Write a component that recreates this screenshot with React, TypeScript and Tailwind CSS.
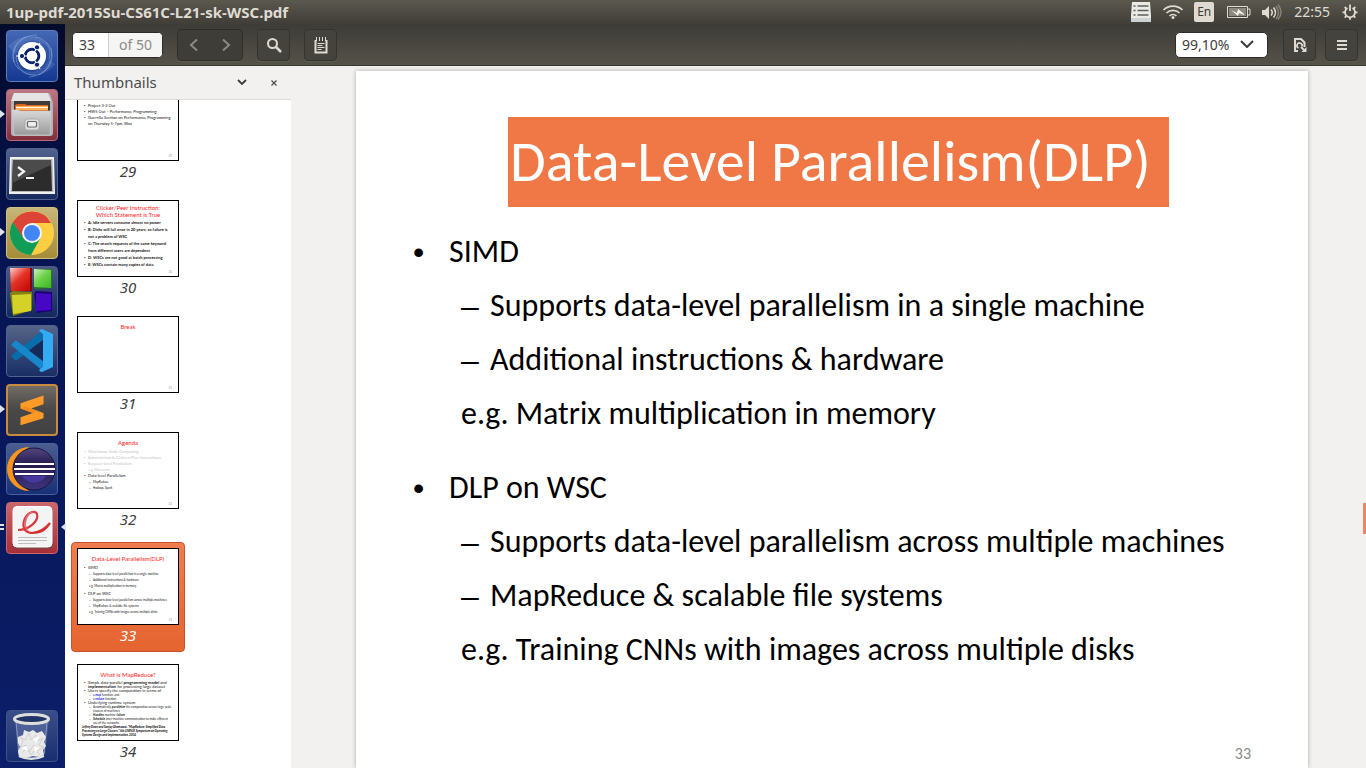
import React from "react";

type Line = { text: React.ReactNode; level?: 0 | 1 | 2 | 3; bold?: boolean; faded?: boolean };
type Page = { number: number; title?: string[]; lines?: Line[]; note?: string; frameClass?: string; listClass?: string };

const pages: Page[] = [
  {
    number: 29,
    listClass: "mt-3 leading-[6px]",
    lines: [
      { text: "Project 3-2 Out" },
      { text: "HW5 Out – Performance Programming" },
      { text: "Guerrilla Section on Performance Programming on Thursday 5-7pm, Woz" },
    ],
  },
  {
    number: 30,
    title: ["Clicker/Peer Instruction:", "Which Statement is True"],
    frameClass: "pt-[3px]",
    listClass: "mt-px leading-[7px]",
    lines: [
      { text: "A: Idle servers consume almost no power", bold: true },
      { text: "B: Disks will fail once in 20 years, so failure is not a problem of WSC", bold: true },
      { text: "C: The search requests of the same keyword from different users are dependent", bold: true },
      { text: "D: WSCs are not good at batch processing", bold: true },
      { text: "E: WSCs contain many copies of data", bold: true },
    ],
  },
  { number: 31, title: ["Break"] },
  {
    number: 32,
    title: ["Agenda"],
    lines: [
      { text: "Warehouse Scale Computing", faded: true },
      { text: "Administrivia & Clickers/Peer Instructions", faded: true },
      { text: "Request-level Parallelism", faded: true },
      { text: "e.g. Web search", level: 2, faded: true },
      { text: "Data-level Parallelism" },
      { text: "MapReduce", level: 1 },
      { text: "Hadoop, Spark", level: 1 },
    ],
  },
  {
    number: 33,
    title: ["Data-Level Parallelism(DLP)"],
    lines: [
      { text: "SIMD" },
      { text: "Supports data-level parallelism in a single machine", level: 1 },
      { text: "Additional instructions & hardware", level: 1 },
      { text: "e.g. Matrix multiplication in memory", level: 2 },
      { text: "DLP on WSC", level: 3 },
      { text: "Supports data-level parallelism across multiple machines", level: 1 },
      { text: "MapReduce & scalable file systems", level: 1 },
      { text: "e.g. Training CNNs with images across multiple disks", level: 2 },
    ],
  },
  {
    number: 34,
    title: ["What is MapReduce?"],
    listClass: "mt-[3px] leading-[4px]",
    lines: [
      { text: <>Simple data-parallel <b>programming model</b> and <b>implementation</b> for processing large dataset</> },
      { text: "Users specify the computation in terms of" },
      { text: <>a <b className="text-[#2020ff]">map</b> function, and</>, level: 1 },
      { text: <>a <b className="text-[#2020ff]">reduce</b> function</>, level: 1 },
      { text: "Underlying runtime system" },
      { text: <>Automatically <b>parallelize</b> the computation across large scale clusters of machines</>, level: 1 },
      { text: <><b>Handles</b> machine <b>failure</b></>, level: 1 },
      { text: <><b>Schedule</b> inter-machine communication to make efficient use of the networks</>, level: 1 },
    ],
    note: "Jeffrey Dean and Sanjay Ghemawat, “MapReduce: Simplified Data Processing on Large Clusters,” 6th USENIX Symposium on Operating Systems Design and Implementation, 2004",
  },
];

function ThumbLine({ line }: { line: Line }) {
  const level = line.level ?? 0;
  const dash = level === 1;
  const bullet = level === 0 || level === 3;
  const size = bullet ? "text-[4px]" : "text-[3px]";
  const indent = dash || level === 2 ? "pl-[5px]" : "";
  const tone = line.faded ? "text-[#c4c4c4]" : "text-[#111]";
  return (
    <li className={`flex ${size} ${indent} ${tone} ${line.bold ? "font-bold" : ""} ${level === 3 ? "mt-[2px]" : ""}`}>
      {level !== 2 && <span className="w-1 shrink-0 font-['Liberation_Sans',sans-serif]">{dash ? "–" : "•"}</span>}
      <span>{line.text}</span>
    </li>
  );
}

function Thumbnail({ page, selected }: { page: Page; selected: boolean }) {
  return (
    <li>
      <button
        aria-current={selected ? "page" : undefined}
        className={`flex h-[110px] w-[114px] flex-col items-center rounded pt-[5px] ${
          selected
            ? "border border-[#c5522a] bg-linear-to-b from-[#f07d4f] to-[#e5642f] text-white"
            : "border border-transparent text-[#3c3c3c]"
        }`}
      >
        <span className={`relative block h-[77px] w-[102px] overflow-hidden border border-black bg-white px-1.5 text-left font-['Lato',sans-serif] ${page.frameClass ?? "pt-1.5"}`}>
          {page.title?.map((t) => (
            <span key={t} className="block text-center text-[6px] leading-[7px] whitespace-nowrap text-[#ff2222]">{t}</span>
          ))}
          {page.lines && (
            <ul className={page.listClass ?? "mt-[3px] leading-[6px]"}>
              {page.lines.map((l, i) => <ThumbLine key={i} line={l} />)}
            </ul>
          )}
          {page.note && <span className="-mx-0.5 block text-[3px] leading-[4px] font-bold text-black italic">{page.note}</span>}
          {!page.note && <span className="absolute right-1.5 bottom-0.5 text-[3px] leading-[4px] text-[#999]">{page.number}</span>}
        </span>
        <span className="text-[15px] leading-5 italic">{page.number}</span>
      </button>
    </li>
  );
}

const icon = "block size-[50px]";

function DashIcon() {
  return (
    <svg viewBox="1 1 50 50" className={icon}>
      <g fill="none" stroke="#8fb0e8" strokeOpacity=".5">
        <path d="M8 32C5 17 15 5 31 5M13 39C3 30 5 13 20 7M45 18c3 16-7 28-22 29M40 12c9 8 9 25-7 33M29 7c12 1 17 12 14 22M10 27c1 12 9 19 20 18" />
      </g>
      <path d="M2 16C16 2 35 2 43 18 30 6 17 8 9 24zM49 34C38 49 17 49 9 35c12 11 27 8 34-6z" fill="#b7ccf3" opacity=".16" />
      <circle cx="26" cy="26" r="14" fill="#fff" />
      <circle cx="26" cy="26" r="6.8" fill="none" stroke="#06246c" strokeWidth="3" />
      <path d="M26 26l8-13M26 26l8 13M26 26H10" stroke="#fff" strokeWidth="1.2" />
      <circle cx="26" cy="26" r="5.3" fill="#fff" />
      <g fill="#06246c" stroke="#fff" strokeWidth="1"><circle cx="16" cy="26" r="2.6" /><circle cx="31" cy="17.3" r="2.6" /><circle cx="31" cy="34.7" r="2.6" /></g>
    </svg>
  );
}

function FilesIcon() {
  return (
    <svg viewBox="1 1 50 50" className={icon}>
      <defs><linearGradient id="cab" x2="0" y2="1"><stop stopColor="#d9d9d9" /><stop offset="1" stopColor="#9a9a9a" /></linearGradient></defs>
      <path d="M8 4h34q2 0 2.5 2L47 14v30q0 3-3 3H8q-3 0-3-3V14l2-8q.3-2 1-2z" fill="#b4b4b4" />
      <path d="M8 4h34l3 8H5z" fill="#e4e4e4" />
      <path d="M8 12h36v11H8z" fill="#423a38" />
      <path d="M9 16l2-1h8l2 1h21v7H9z" fill="#d8641e" />
      <path d="M10 17h32v1H10zM10 19h32v2H10z" fill="#ffb35c" />
      <path d="M10 18h32v1H10z" fill="#fff0d8" />
      <path d="M6 21h6l2 1h31l-1 24H8z" fill="url(#cab)" stroke="#d0d0d0" strokeWidth=".6" />
      <rect x="19" y="30" width="14" height="11" rx="2.5" fill="#e0e0e0" stroke="#aaa" />
      <rect x="21.5" y="32.5" width="9" height="5.5" rx="1" fill="#eee" stroke="#666" strokeWidth="1.2" />
    </svg>
  );
}

function TerminalIcon() {
  return (
    <svg viewBox="1 1 50 50" className={icon}>
      <path d="M4 9h44l1 37H3z" fill="#f0f0ee" />
      <path d="M5.5 11h41l1 33H4.5z" fill="#b8b8b6" />
      <path d="M7 12h38l1 31H6z" fill="#2b2c2b" />
      <path d="M7 12h38v5L6 35z" fill="#4a4b4a" />
      <path d="M12 19l6 4.5-6 4.5" fill="none" stroke="#f4f4f4" strokeWidth="2.2" />
      <path d="M20 30h8" stroke="#f4f4f4" strokeWidth="2" />
    </svg>
  );
}

function ChromeIcon() {
  return (
    <svg viewBox="1 1 50 50" className={icon}>
      <circle cx="26" cy="26" r="22" fill="#ffcd42" />
      <path d="M6.9 15A22 22 0 0 1 45.1 16H26L16.5 31.5z" fill="#db4437" />
      <path d="M6.9 15A22 22 0 0 0 25 48l9.5-17H17.4z" fill="#109d58" />
      <circle cx="26" cy="26" r="10" fill="#f4f4f4" /><circle cx="26" cy="26" r="8" fill="#4285f4" />
    </svg>
  );
}

function BlocksIcon() {
  return (
    <svg viewBox="1 1 50 50" className={icon}>
      <defs>
        <linearGradient id="redBlock" x2=".8" y2="1"><stop stopColor="#ffd0cc" /><stop offset=".5" stopColor="#e43326" /><stop offset="1" stopColor="#c60b08" /></linearGradient>
        <linearGradient id="greenBlock" x2=".8" y2="1"><stop stopColor="#c9f2bd" /><stop offset=".5" stopColor="#6fd24c" /><stop offset="1" stopColor="#45b92c" /></linearGradient>
      </defs>
      <path d="M4 3l22-1v23l-20 1z" fill="#790908" /><path d="M4 2h20v23H5z" fill="url(#redBlock)" />
      <path d="M28 4l18-1v19l-17 1z" fill="#1e7c12" /><path d="M28 3l17 1v18l-17-1z" fill="url(#greenBlock)" />
      <path d="M4 27l3-2 19 1v18L7 50z" fill="#878311" /><path d="M6 29l19-1v17L7 48z" fill="#d4d226" />
      <path d="M28 28l2-3 16 1v19l-15 2z" fill="#1e0074" /><path d="M30 27l15 1v16l-15 1z" fill="#4608c4" />
    </svg>
  );
}

function CodeIcon() {
  return (
    <svg viewBox="1 1 50 50" className={icon}>
      <path d="M5 31l4 4q1 .7 2 0L37 15V5z" fill="#096cab" />
      <path d="M5 20l4-4q1-.7 2 0l26 20v10z" fill="#1687cb" />
      <path d="M36 4l11 5v33l-11 5q-2 0-3-2l4-3V9l-4-3q1-2 3-2z" fill="#33aaf2" />
      <path d="M37 15v21L23 25.5z" fill="#172957" />
    </svg>
  );
}

function SublimeIcon() {
  return (
    <svg viewBox="1 1 50 50" className={icon}>
      <path d="M14 19l24-8v9l-13 4.5L38 29v5.5L14 42v-8.5L27 29l-13-4.5z" fill="#ff9a26" />
      <path d="M14 24.5l13 4.5 5-2-7-2.5-6-2z" fill="#f5891b" />
    </svg>
  );
}

function EclipseIcon() {
  return (
    <svg viewBox="1 1 50 50" className={icon}>
      <defs><linearGradient id="moon" x2="0" y2="1"><stop stopColor="#54477f" /><stop offset=".4" stopColor="#241a4d" /><stop offset="1" stopColor="#3f3580" /></linearGradient></defs>
      <path d="M23 4A22 22 0 0 0 23 48 C10 39 10 13 23 4z" fill="#f7941e" />
      <circle cx="28" cy="26" r="21" fill="url(#moon)" stroke="#1b153c" />
      <path d="M16 33a14 14 0 0 0 24 0z" fill="#4638a0" />
      <path d="M9 21h39M8 26h41M9 31h39" stroke="#fff" strokeWidth="2.2" />
    </svg>
  );
}

function ViewerIcon() {
  return (
    <svg viewBox="1 1 50 50" className={icon}>
      <rect x="7" y="6" width="40" height="41" rx="4" fill="#555" opacity=".5" />
      <rect x="7" y="4.5" width="39" height="40.5" rx="4" fill="#f4f4f4" stroke="#fff" />
      <path d="M12 28c11 0 21-9 19-16-2-5-11-1-13 7-2 8 2 12 9 12 7-1 12-4 17-10" fill="none" stroke="#d8383c" strokeWidth="2.2" />
      <path d="M25 30c8 0 13-3 20-9-5 9-13 13-20 9z" fill="#d42c31" />
      <path d="M19 17c2-6 7-9 11-7-4 0-7 2-9 7-2 6-1 10 3 13-5-2-7-7-5-13z" fill="#e46e70" />
      <path d="M12 35.5h29M12 38.5h29M12 41.5h18" stroke="#bdbdbd" />
    </svg>
  );
}

function TrashIcon() {
  return (
    <svg viewBox="1 1 50 50" className={icon}>
      <path d="M9 9l3 35q14 8 27 0l4-35z" fill="#c5d4f4" opacity=".2" />
      <path d="M10 11l3 33q12 7 25 0l3-33" fill="none" stroke="#b3bddb" strokeOpacity=".6" />
      <path d="M12 27l5-2 1-5 5 2 4-2 4 3 5-2 4 6-2 5 2 4-3 4 1 5-4 2-7-1-7 2-7-1-1-6 2-4-2-4z" fill="#e9e9e9" />
      <path d="M14 27l5 3 4-7 2 7 5-5 1 6 6-3-4 7 5 2-7 4-3-6-5 7-3-7-6 3 3-7zM16 43l5-5 4 7 4-5 5 5" fill="none" stroke="#d0d0d0" />
      <path d="M15 38l6-2 1 5zM27 29l6-3-2 7zM28 36l5 2-4 5z" fill="#fff" />
      <ellipse cx="25.5" cy="9" rx="17" ry="4.5" fill="#203466" stroke="#dededc" strokeWidth="3" />
      <path d="M13 46q12 6 25 0" fill="none" stroke="#e2e2e2" strokeWidth="2" />
    </svg>
  );
}

const apps = [
  { name: "Search your computer", icon: <DashIcon />, tile: "from-[#4568b4] to-[#153891] border-[#5e7dbb]" },
  { name: "Files", icon: <FilesIcon />, tile: "from-[#bb7884] to-[#822d3a] border-[#b46b77]", running: true },
  { name: "Terminal", icon: <TerminalIcon />, tile: "from-[#52628d] to-[#172b60] border-[#52638e]" },
  { name: "Google Chrome", icon: <ChromeIcon />, tile: "from-[#c7b679] to-[#a58c38] border-[#d1c17e]", running: true },
  { name: "Code::Blocks", icon: <BlocksIcon />, tile: "from-[#4d5a82] to-[#14285e] border-[#4b5c89]" },
  { name: "Visual Studio Code", icon: <CodeIcon />, tile: "from-[#566487] to-[#182e65] border-[#52638e]" },
  { name: "Sublime Text", icon: <SublimeIcon />, tile: "from-[#716b65] via-[#484848] to-[#414141] border-2 border-[#c98a3c]", running: true },
  { name: "Eclipse", icon: <EclipseIcon />, tile: "from-[#4a5d91] to-[#183177] border-[#4a629b]" },
  { name: "Document Viewer", icon: <ViewerIcon />, tile: "from-[#c8666c] to-[#a72e36] border-[#c96a70]", active: true },
];

function Launcher() {
  return (
    <nav aria-label="Launcher" className="flex w-[65px] shrink-0 flex-col justify-between bg-linear-to-b from-[#020b2c] via-[#061452] via-30% to-[#0c1e69] px-1.5 pt-1.5 pb-1.5">
      <ul className="flex flex-col gap-[7px]">
        {apps.map((a) => (
          <li key={a.name} className="relative">
            <button aria-label={a.name} className={`flex size-[52px] items-center justify-center overflow-hidden rounded border bg-linear-to-b ${a.tile}`}>{a.icon}</button>
            {a.running && (
              <svg viewBox="0 0 5 10" className="absolute top-5 -left-1.5 h-2.5 w-[5px]"><path d="M0 1l5 4-5 4z" fill="#dfe2e8" /></svg>
            )}
            {a.active && (
              <>
                <svg viewBox="0 0 5 10" className="absolute top-5 -left-1.5 h-2.5 w-[5px]"><path d="M0 2h4v2H0zM0 6h4v2H0z" fill="#dfe2e8" /></svg>
                <svg viewBox="0 0 5 10" className="absolute top-5 -right-[7px] h-2.5 w-[5px]"><path d="M5 1L0 5l5 4z" fill="#dfe2e8" /></svg>
              </>
            )}
          </li>
        ))}
      </ul>
      <button aria-label="Trash" className="block size-[52px] overflow-hidden rounded border border-[#40528c] bg-linear-to-b from-[#3c4e86] to-[#192e73]"><TrashIcon /></button>
    </nav>
  );
}

function TopBar() {
  return (
    <header className="flex h-6 shrink-0 items-center justify-between bg-linear-to-b from-[#5b584e] to-[#403e38] pr-2 pl-1.5 text-[#dfdbd2]">
      <h1 className="text-[15px] leading-6 font-bold">1up-pdf-2015Su-CS61C-L21-sk-WSC.pdf</h1>
      <div className="flex items-center">
        <button aria-label="Window list">
          <svg viewBox="0 0 22 20" className="block h-5 w-[22px]"><path d="M2 0h18l1 14v6H1v-6z" fill="#eceae5" /><path d="M1 16h20v4H1z" fill="#cfd2d2" /><path d="M3.5 4h2M7.5 4h11M3.5 8.5h2M7.5 8.5h11M3.5 13h2M7.5 13h11" stroke="#58605f" strokeWidth="1.6" /></svg>
        </button>
        <button aria-label="Network" className="ml-2.5">
          <svg viewBox="0 0 22 16" className="block h-4 w-[22px]" fill="none" stroke="#dfdbd2" strokeWidth="1.7"><path d="M1.5 6a13.5 13.5 0 0 1 19 0M4.5 9a9.3 9.3 0 0 1 13 0M7.5 12a5 5 0 0 1 7 0" /><circle cx="11" cy="13.5" r="1.5" fill="#dfdbd2" stroke="none" /></svg>
        </button>
        <button aria-label="Keyboard layout" className="ml-2.5 h-5 w-5 rounded-xs bg-[#dfdbd2] text-center text-[12px] leading-5 text-[#3c3b37]">En</button>
        <button aria-label="Battery" className="ml-3">
          <svg viewBox="0 0 26 14" className="block h-3.5 w-[26px]"><path d="M1.5 1.5h20v11h-20z" fill="none" stroke="#dfdbd2" /><path d="M3 3h17v8H3z" fill="#8b8880" /><path d="M22 4h2v6h-2" fill="none" stroke="#dfdbd2" /><path d="M5 5l6 3 1-4 6 5v1l-5-2-1 3z" fill="#f6f4ee" /></svg>
        </button>
        <button aria-label="Sound" className="ml-2.5">
          <svg viewBox="0 0 20 16" className="block h-4 w-5"><path d="M0 6h3l4-4v13l-4-4H0z" fill="#dfdbd2" /><g fill="none" strokeWidth="1.5"><path d="M9 5.5q2.5 3 0 6M11.5 3.5q4 5 0 10" stroke="#dfdbd2" /><path d="M14 2q5 6.5 0 13M16 .5q6 8 0 15" stroke="#858278" /></g></svg>
        </button>
        <button className="ml-3 text-[14px] leading-6">22:55</button>
        <button aria-label="Session menu" className="ml-3">
          <svg viewBox="0 0 16 18" className="block h-[18px] w-4" fill="none" stroke="#dfdbd2" strokeWidth="1.8">
            <path d="M5.5 5a5 5 0 1 0 5 0" />
            <path d="M8 1.5V8" />
            <path d="M3 9.3H.5M13 9.3h2.5M4.5 5.8L2.7 4M11.5 5.8L13.3 4M4.5 12.8l-1.8 1.8M11.5 12.8l1.8 1.8M8 14.3v2.5" />
          </svg>
        </button>
      </div>
    </header>
  );
}

const toolButton = "flex h-8 w-[33px] items-center justify-center rounded border border-[#34332e] bg-[#45433d] text-[#dfdbd2] shadow-[0_1px_0_#5d5a51]";

function Toolbar() {
  return (
    <div className="flex h-[42px] shrink-0 items-center justify-between border-b border-[#393731] bg-linear-to-b from-[#3e3c37] to-[#555249] pr-2 pl-[7px]">
      <div className="flex items-center">
        <div className="flex h-[26px] w-[91px] items-center overflow-hidden rounded-[5px] border border-[#2d2c28] bg-white text-[14px]">
          <input aria-label="Page number" defaultValue="33" className="h-full w-9 border-r border-[#cfcfcf] bg-white pl-1.5 text-[#3c3c3c] outline-none" />
          <span className="flex-1 bg-[#f5f5f4] text-center leading-6 text-[#8b8b8b]">of 50</span>
        </div>
        <div className="ml-3.5 flex h-8 w-[66px] rounded border border-[#2f2e2a] bg-[#3e3d38] text-[#8d8a82] shadow-[0_1px_0_#5d5a51]">
          <button aria-label="Previous page" className="flex flex-1 items-center justify-center"><svg viewBox="0 0 10 14" className="h-3.5 w-2.5" fill="none" stroke="currentColor" strokeWidth="2"><path d="M8 1.5L2 7l6 5.5" /></svg></button>
          <button aria-label="Next page" className="flex flex-1 items-center justify-center"><svg viewBox="0 0 10 14" className="h-3.5 w-2.5" fill="none" stroke="currentColor" strokeWidth="2"><path d="M2 1.5L8 7l-6 5.5" /></svg></button>
        </div>
        <button aria-label="Find" className={`ml-3.5 ${toolButton}`}><svg viewBox="0 0 16 16" className="size-4" fill="none" stroke="currentColor" strokeWidth="2"><circle cx="6.5" cy="6.5" r="4.5" /><path d="M10 10l5 5" strokeWidth="2.5" /></svg></button>
        <button aria-label="Annotate" className={`ml-3.5 ${toolButton}`}><svg viewBox="0 0 14 18" className="h-[18px] w-3.5" fill="none" stroke="currentColor"><path d="M1.5 4v12.5h11V4" strokeWidth="2" /><path d="M2.5 1v4M5.5 1v4M8.5 1v4M11.5 1v4" /><path d="M3.5 7.5h7M3.5 9.5h5M3.5 11.5h7M3.5 13.5h4" /></svg></button>
      </div>
      <div className="flex items-center">
        <div className="relative">
          <select aria-label="Zoom" className="h-[26px] w-[93px] appearance-none rounded-[5px] border border-[#2d2c28] bg-white pl-1.5 text-[14px] leading-6 text-[#3c3c3c]"><option>99,10%</option></select>
          <svg viewBox="0 0 14 8" className="pointer-events-none absolute top-2 right-3.5 h-2 w-3.5" fill="none" stroke="#3c3c3c" strokeWidth="2"><path d="M1 1l6 6 6-6" /></svg>
        </div>
        <button aria-label="View options" className={`ml-[15px] ${toolButton}`}>
          <svg viewBox="0 0 14 16" className="h-4 w-3.5" fill="none" stroke="currentColor" strokeWidth="2"><path d="M5 14H2V2h6l3.5 3.5V10" /><path d="M5.5 11a2.6 2.6 0 1 1 3.5-1.5" strokeWidth="1.6" /><path d="M8 10l4 4" /><path d="M13.5 10v5h-5z" fill="currentColor" stroke="none" /></svg>
        </button>
        <button aria-label="File options" className={`ml-[9px] ${toolButton}`}><svg viewBox="0 0 10 12" className="h-3 w-2.5" stroke="currentColor" strokeWidth="2"><path d="M0 2h10M0 6h10M0 10h10" /></svg></button>
      </div>
    </div>
  );
}

function Sidebar() {
  return (
    <aside className="flex w-[226px] shrink-0 flex-col bg-white">
      <div className="flex h-[34px] shrink-0 items-center border-b border-[#dcdbd9] bg-[#f2f1f0] pr-[11px] pl-[9px] text-[#4c4c4c]">
        <h2 className="flex-1 text-[15px]">Thumbnails</h2>
        <button aria-label="Choose side pane" className="p-1"><svg viewBox="0 0 10 7" className="h-[7px] w-2.5" fill="none" stroke="#3c3c3c" strokeWidth="1.8"><path d="M1 1l4 4 4-4" /></svg></button>
        <button aria-label="Close side pane" className="ml-[17px] p-0.5"><svg viewBox="0 0 8 8" className="size-2" stroke="#4c4c4c" strokeWidth="1.2"><path d="M1.5 1.5l5 5M6.5 1.5l-5 5" /></svg></button>
      </div>
      <div className="min-h-0 flex-1 overflow-hidden">
        <ol className="-mt-[22px] flex flex-col gap-1.5 pl-1.5">
          {pages.map((p) => <Thumbnail key={p.number} page={p} selected={p.number === 33} />)}
        </ol>
      </div>
    </aside>
  );
}

function Topic({ title, points, example }: { title: string; points: string[]; example: string }) {
  return (
    <li>
      <div className="flex"><span className="w-9 shrink-0 font-['Liberation_Sans',sans-serif]">•</span><span>{title}</span></div>
      <ul className="pl-12">
        {points.map((p) => <li key={p} className="flex"><span className="w-[29px] shrink-0 font-['Liberation_Sans',sans-serif]">–</span><span>{p}</span></li>)}
        <li>{example}</li>
      </ul>
    </li>
  );
}

function Slide() {
  return (
    <article className="w-[952px] shrink-0 bg-white pt-[46px] font-['Carlito','Lato','Liberation_Sans',sans-serif] text-black shadow-[0_0_4px_#aaa8a4]">
      <h2 className="ml-[152px] h-[90px] w-[661px] bg-[#f07746] pl-0.5 text-[58px] leading-[90px] whitespace-nowrap text-white">Data-Level Parallelism(DLP)</h2>
      <ul className="mt-[18px] flex flex-col gap-5 pl-[57px] text-[32px] leading-[54px] whitespace-nowrap">
        <Topic title="SIMD" points={["Supports data-level parallelism in a single machine", "Additional instructions & hardware"]} example="e.g. Matrix multiplication in memory" />
        <Topic title="DLP on WSC" points={["Supports data-level parallelism across multiple machines", "MapReduce & scalable file systems"]} example="e.g. Training CNNs with images across multiple disks" />
      </ul>
      <p className="mt-[67px] pr-[57px] text-right text-[16px] leading-5 text-[#8b8b8b]">33</p>
    </article>
  );
}

export default function App() {
  return (
    <div className="flex h-screen flex-col overflow-hidden bg-[#f2f1f0] font-['Noto_Sans',sans-serif]">
      <TopBar />
      <div className="flex min-h-0 flex-1">
        <Launcher />
        <div className="flex min-w-0 flex-1 flex-col">
          <Toolbar />
          <div className="flex min-h-0 flex-1">
            <Sidebar />
            <main className="relative flex min-w-0 flex-1 justify-center overflow-hidden pt-[5px] pl-[7px]">
              <Slide />
              <span className="absolute top-[437px] right-0 h-[31px] w-[3px] bg-[#f08763]" />
            </main>
          </div>
        </div>
      </div>
    </div>
  );
}
